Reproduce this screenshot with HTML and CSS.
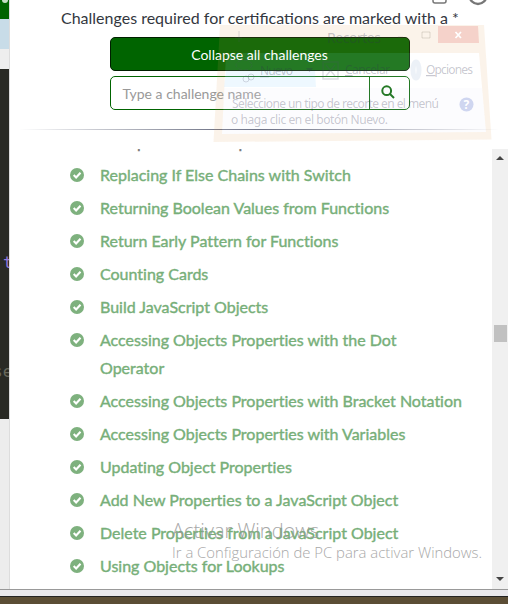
FILE: index.html
```html
<!DOCTYPE html>
<html lang="en">
<head>
<meta charset="utf-8">
<title>Challenge map</title>
<link rel="stylesheet" href="styles.css">
</head>
<body>
<svg class="defs" width="0" height="0"><symbol id="check" viewBox="0 0 14 14"><circle cx="7" cy="7" r="7" fill="#7eb17e"/><path d="M3.7 7.1 6.1 9.5 10.5 4.7" fill="none" stroke="#fff" stroke-width="2.1"/></symbol></svg>
<div class="screen">
  <aside class="editor">
    <div class="nav"><i></i></div><div class="blue"></div><div class="gray"></div>
    <div class="code"><span class="keyword">t</span><span class="comment">se</span></div>
    <div class="rest"></div>
  </aside>
  <main class="map">
    <header>
      <svg class="controls" width="60" height="6" viewBox="0 0 60 6"><path d="M2-4V1Q2 3 4 3H13Q15 3 15 1V-4" fill="none" stroke="#777" stroke-width="1.5"/><circle cx="47" cy="-4.5" r="8.500" fill="none" stroke="#777" stroke-width="2.4"/></svg>
      <p class="note">Challenges required for certifications are marked with a *</p>
      <button class="collapse">Collapse all challenges</button>
      <div class="search"><span class="field">Type a challenge name</span><span class="go"><svg width="14" height="14" viewBox="0 0 14 14"><circle cx="5.7" cy="5.7" r="4.4"/><path d="M9 9 13 13"/></svg></span></div>
      <div class="rule"></div>
    </header>
    <div class="body">
      <ul>
        <li class="past"><svg><use href="#check"/></svg><span>Multiple Identical Options in Switch Statements</span></li>
        <li><svg><use href="#check"/></svg><span>Replacing If Else Chains with Switch</span></li>
        <li><svg><use href="#check"/></svg><span>Returning Boolean Values from Functions</span></li>
        <li><svg><use href="#check"/></svg><span>Return Early Pattern for Functions</span></li>
        <li><svg><use href="#check"/></svg><span>Counting Cards</span></li>
        <li><svg><use href="#check"/></svg><span>Build JavaScript Objects</span></li>
        <li><svg><use href="#check"/></svg><span>Accessing Objects Properties with the Dot<br>Operator</span></li>
        <li><svg><use href="#check"/></svg><span>Accessing Objects Properties with Bracket Notation</span></li>
        <li><svg><use href="#check"/></svg><span>Accessing Objects Properties with Variables</span></li>
        <li><svg><use href="#check"/></svg><span>Updating Object Properties</span></li>
        <li><svg><use href="#check"/></svg><span>Add New Properties to a JavaScript Object</span></li>
        <li><svg><use href="#check"/></svg><span>Delete Properties from a JavaScript Object</span></li>
        <li><svg><use href="#check"/></svg><span>Using Objects for Lookups</span></li>
      </ul>
      <div class="scrollbar"><i class="up"></i><b></b><i class="down"></i></div>
    </div>
  </main>
  <footer><div></div></footer>

  <svg class="snip" width="508" height="150" viewBox="0 0 508 150">
    <path d="M220 25H484L491.500 139.500 213.500 142ZM226 53 222 134 486 132 479 53Z" fill="#e0a050" fill-opacity=".12" fill-rule="evenodd"/>
    <path d="M226 53H479L486 132 222 134Z" fill="#fcfcff" fill-opacity=".14"/>
    <path d="M224 88H482L486 132 222 134Z" fill="#5064c8" fill-opacity=".02"/>
    <path d="M226 71H315L316 87H224Z" fill="#78c8ff" fill-opacity=".13"/>
    <path d="M438 26H478L479 43H438Z" fill="#e0504c" fill-opacity=".2"/>
    <path d="M455.500 32 461 38M461 32 455.500 38" stroke="#fff" stroke-width="1.7"/>
    <path d="M422 32H430V38H422ZM398 37H403" fill="none" stroke="#6b5945" stroke-opacity=".2"/>
    <g fill="#303050" fill-opacity=".27">
      <text x="327" y="43" font-size="14" textLength="54">Recortes</text>
      <text x="260" y="75" font-size="12" textLength="33"><tspan text-decoration="underline">N</tspan>uevo</text>
      <path d="M306 68H313L309.500 72Z"/>
      <text x="345" y="74" font-size="12" textLength="45"><tspan text-decoration="underline">C</tspan>ancelar</text>
      <text x="426" y="74" font-size="12" textLength="47"><tspan text-decoration="underline">O</tspan>pciones</text>
      <text x="232" y="108" font-size="12" textLength="207">Seleccione un tipo de recorte en el menú</text>
      <text x="231" y="123.500" font-size="12" textLength="157">o haga clic en el botón Nuevo.</text>
    </g>
    <g fill="none" stroke="#505070" stroke-opacity=".2">
      <path d="M323 62H338V79H323ZM326 65 335 76M335 65 326 76" stroke-width="1.400"/>
      <ellipse cx="244" cy="65" rx="8" ry="5" stroke-dasharray="4 2"/><circle cx="246" cy="79" r="3"/><circle cx="251" cy="77" r="3"/>
      <path d="M239 31V42M235 38H242"/>
      <ellipse cx="416" cy="70" rx="3" ry="8" stroke="#96b4d2" stroke-opacity=".18" stroke-width="5"/>
    </g>
    <circle cx="466.500" cy="104.500" r="7" fill="#4664c8" fill-opacity=".25"/>
    <text x="463.500" y="109" font-size="12" fill="#fff" font-weight="bold">?</text>
  </svg>
  <div class="activate"><div class="title">Activar Windows</div><svg width="320" height="22"><text x="0" y="15" textLength="310" lengthAdjust="spacingAndGlyphs">Ir a Configuración de PC para activar Windows.</text></svg></div>
</div>
</body>
</html>
```
FILE: styles.css
```css
* { box-sizing: border-box; }
body { margin: 0; background: #fff; font-family: Lato, sans-serif; }
.defs { position: absolute; }
.screen { position: relative; width: 508px; height: 604px; overflow: hidden; display: grid; grid-template-columns: 9px 1fr; grid-template-rows: 589px 15px; }
.editor { display: flex; flex-direction: column; overflow: hidden; }
.nav { height: 19px; background: #006400; }
.nav i { display: block; width: 6px; height: 3px; margin-left: 2px; border-radius: 0 0 3px 3px; background: #c4dec4; }
.blue { height: 30px; background: #c8dce8; }
.gray { height: 20px; background: #eee; }
.code { height: 350px; padding-top: 183px; background: #292a24; font: 16px/22px "DejaVu Sans Mono", monospace; }
.code span { display: block; }
.keyword { color: #967bdc; padding-left: 3px; }
.comment { color: #67685b; margin: 87px 0 0 -7px; }
.rest { flex: 1; background: #ededed; }
.map { display: flex; flex-direction: column; border-left: 1px solid #ddd; background: #fff; overflow: hidden; }
header { height: 149px; flex: none; display: flex; flex-direction: column; align-items: center; }
.controls { align-self: flex-end; margin-right: 17px; height: 6px; flex: none; }
.note { width: 100%; margin: 0; padding-left: 51px; height: 31px; line-height: 24px; font-size: 16px; color: #333740; white-space: nowrap; }
.collapse { width: 300px; height: 34px; flex: none; padding: 0; border: 1px solid #001f00; border-radius: 5px; background: #006400; color: #fff; font: 14px Lato, sans-serif; margin-left: 1px; }
.search { width: 300px; height: 34px; margin: 5px 0 0 1px; flex: none; display: flex; border: 1px solid #006400; border-radius: 5px; }
.field { flex: 1; padding-left: 12px; line-height: 34px; font-size: 14px; color: #999; }
.go { width: 40px; border-left: 1px solid #006400; display: flex; align-items: center; justify-content: center; padding-right: 2px; padding-bottom: 3px; }
.go svg { fill: none; stroke: #006400; stroke-width: 2; }
.rule { width: 480px; height: 1px; margin-top: 19px; background: linear-gradient(90deg, #fff, #555a70 50%, #fff); }
.body { height: 440px; display: flex; }
ul { flex: 1; height: 440px; overflow: hidden; list-style: none; margin: 0; padding: 0 0 0 60px; }
li { display: flex; padding-bottom: 5px; color: #77af79; font-size: 16px; line-height: 28px; -webkit-text-stroke: .4px #77af79; white-space: nowrap; font-variant-ligatures: none; }
li svg { width: 14px; height: 14px; margin: 7px 16px 0 0; flex: none; }
.past { margin-top: -21px; color: #777; -webkit-text-stroke-color: #777; }
.scrollbar { width: 16px; background: #f0f0f0; display: flex; flex-direction: column; align-items: center; }
.scrollbar i { border: 4px solid transparent; width: 0; height: 0; }
.scrollbar .up { border-top: 0; border-bottom-color: #444; margin-top: 7px; }
.scrollbar .down { border-bottom: 0; border-top-color: #444; margin: auto 0 8px; }
.scrollbar b { width: 13px; height: 17px; background: #c1c1c1; margin-top: 165px; margin-right: 1px; align-self: flex-end; }
footer { grid-column: 1 / 3; background: #5b4d35; }
footer div { height: 8px; border-top: 1px solid #999; border-bottom: 1px solid #222; background: #e8e7eb; }
.snip { position: absolute; left: 0; top: 0; font-family: "Noto Sans", sans-serif; }
.activate { position: absolute; left: 172px; top: 517px; color: #999; font-family: "Open Sans", sans-serif; font-weight: 300; opacity: .85; }
.title { height: 26px; font-size: 20px; line-height: 27px; }
.activate svg { display: block; font-size: 14.400px; fill: #999; }
```
